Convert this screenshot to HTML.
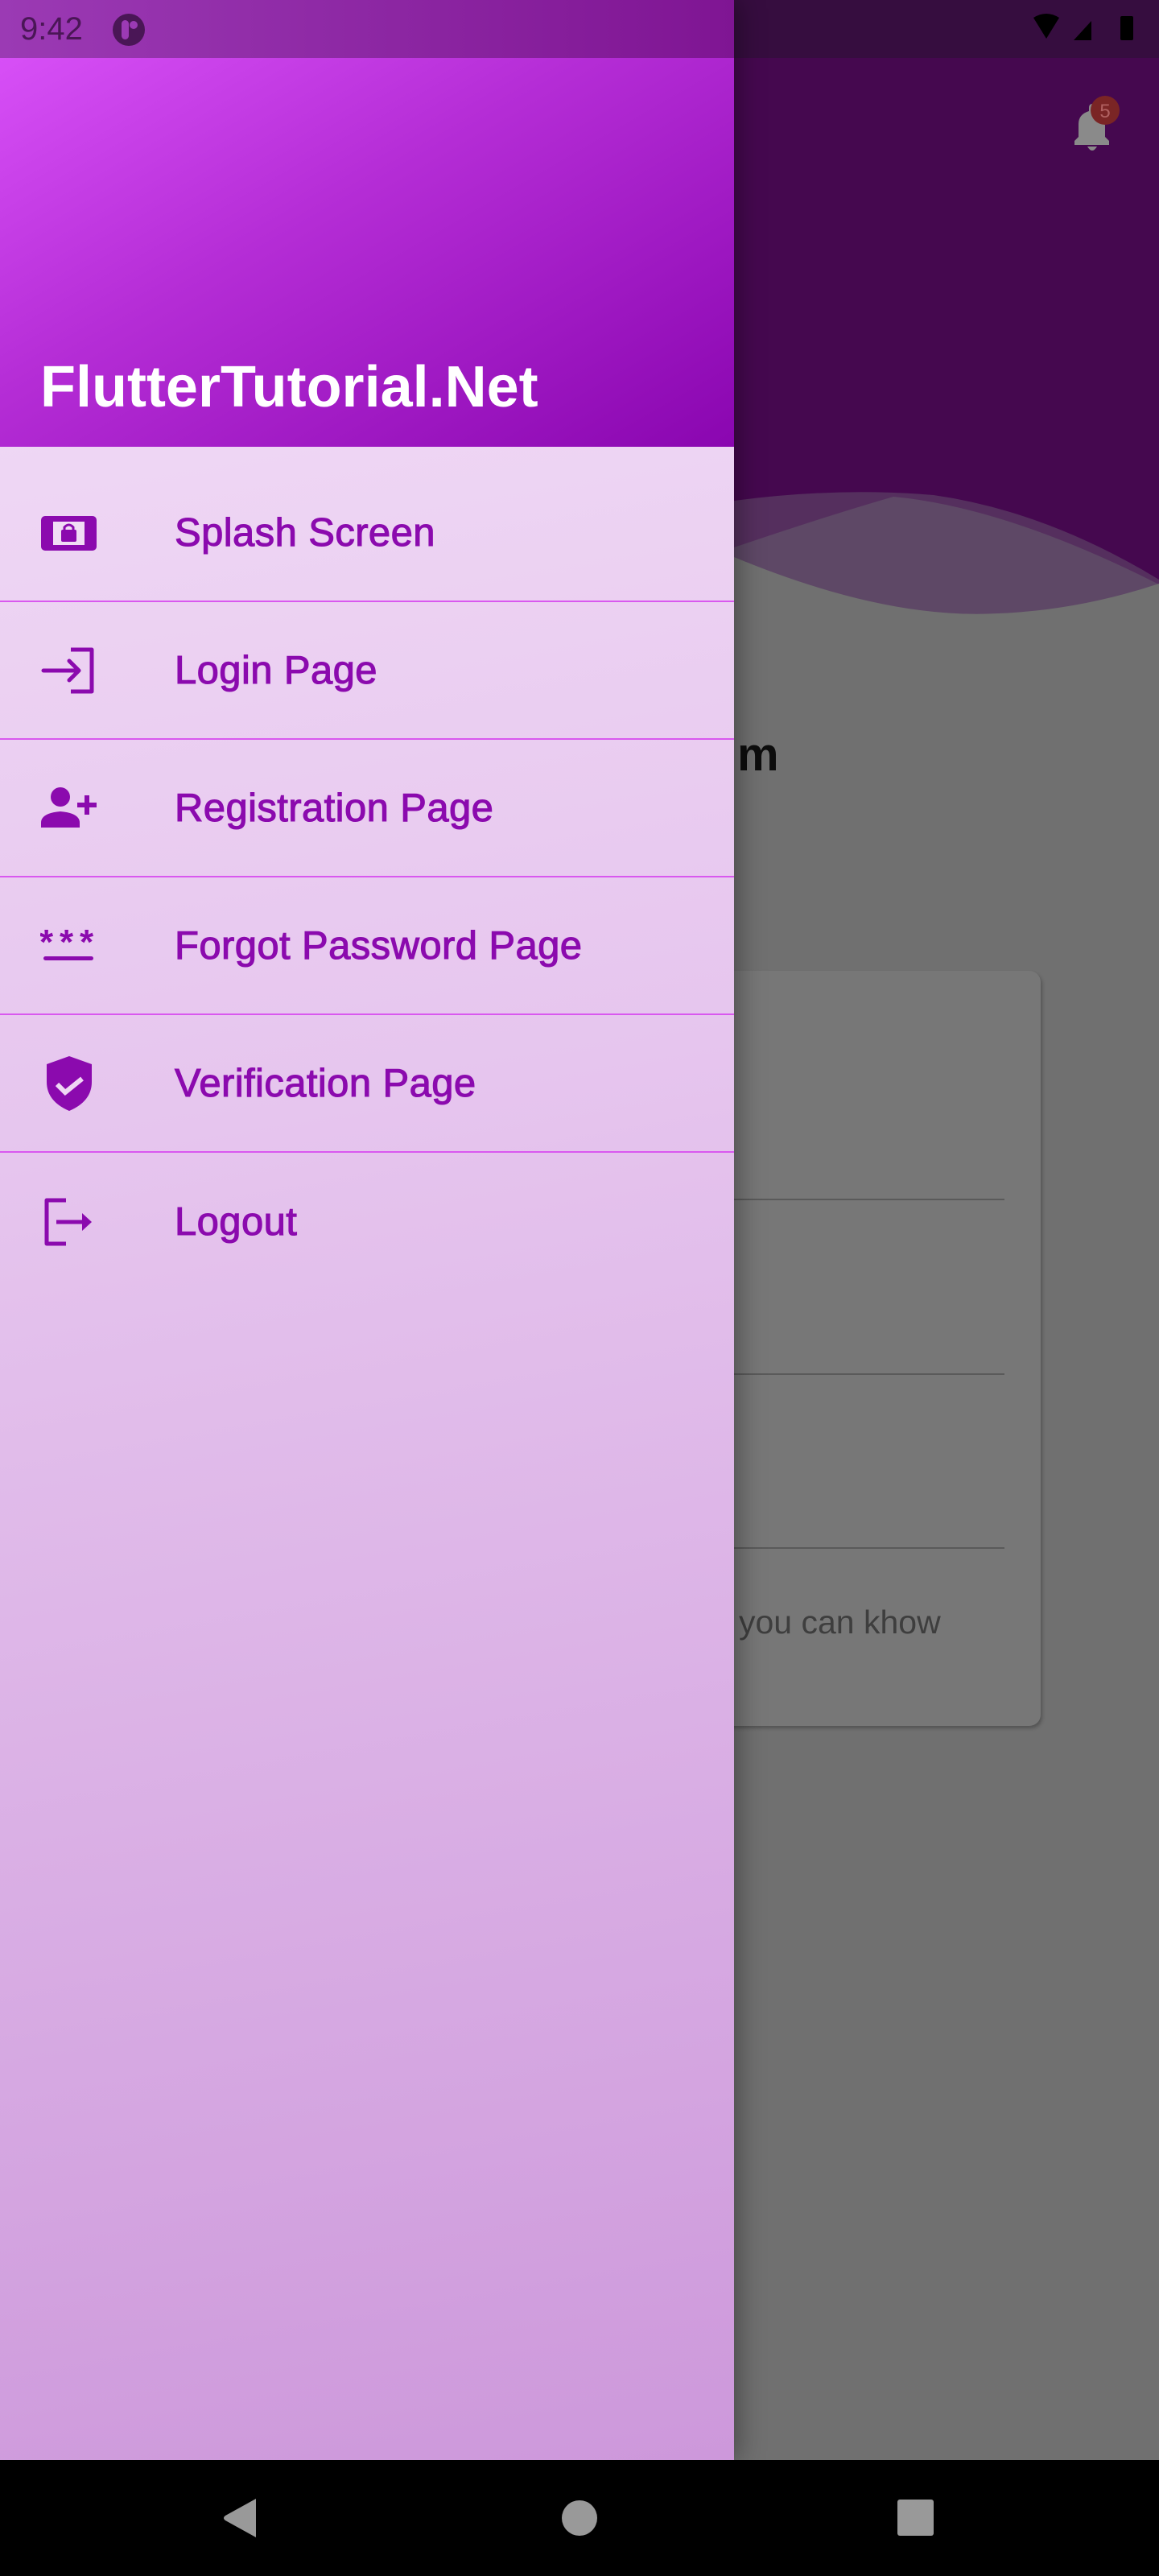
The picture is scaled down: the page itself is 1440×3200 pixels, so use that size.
<!DOCTYPE html>
<html><head><meta charset="utf-8">
<style>
*{margin:0;padding:0;box-sizing:border-box}
html,body{width:1440px;height:3200px;overflow:hidden;background:#707070;font-family:"Liberation Sans",sans-serif}
.abs{position:absolute}
#bg{left:0;top:0;width:1440px;height:3200px;background:#707070}
#drawer{left:0;top:0;width:912px;height:3056px;background:linear-gradient(170deg,#f4e2f8 0%,#e6c5ee 45%,#cd98db 100%);box-shadow:6px 0 30px rgba(0,0,0,.35)}
#header{left:0;top:0;width:912px;height:555px;background:linear-gradient(150deg,#dd55fc 0%,#b52dd6 45%,#8a06b0 100%)}
#sb{left:0;top:0;width:912px;height:72px;background:linear-gradient(90deg,#9b3ab4,#7f1593)}
#sbr{left:912px;top:0;width:528px;height:72px;background:#360d3f}
.title{left:50px;top:440px;font-size:72px;font-weight:bold;color:#fff;letter-spacing:0}
.row{left:0;width:912px;height:171px;border-bottom:2px solid #d958ef}
.row span{position:absolute;left:217px;top:50%;transform:translateY(-50%);font-size:49px;color:#8b0aae;-webkit-text-stroke:1.1px #8b0aae;letter-spacing:0.4px}
.row svg{position:absolute;left:50px;top:50%;transform:translateY(-50%)}
.nav{left:0;top:3056px;width:1440px;height:144px;background:#000}
</style></head><body>
<div id="bg" class="abs"></div>
<svg class="abs" style="left:912px;top:72px" width="528" height="720" viewBox="912 72 528 720">
<rect x="912" y="72" width="528" height="720" fill="#45084f"/>
<path d="M912 622 Q1040 605 1160 615 Q1300 635 1440 720 L1440 792 L912 792 Z" fill="#552f5e"/>
<path d="M912 680 Q1030 640 1110 617 Q1250 630 1440 726 L1440 792 L912 792 Z" fill="#5e4866"/>
<path d="M912 692 Q1100 770 1240 762 Q1340 758 1440 725 L1440 792 L912 792 Z" fill="#707070"/>
</svg>
<svg class="abs" style="left:1325px;top:118px" width="80" height="80" viewBox="0 0 80 80">
<path d="M10 62 L10 57 L15 52 L15 36 Q15 24 28 20 L28 16 Q28 11 32 11 Q36 11 36 16 L36 20 Q48 24 48 36 L48 52 L53 57 L53 62 Z" fill="#8a8a8a"/>
<path d="M26 64 Q32 74 38 64 Z" fill="#8a8a8a"/>
<circle cx="48" cy="19" r="18" fill="#7a2525"/>
<text x="48" y="28" font-size="24" fill="#b06060" text-anchor="middle" font-family="Liberation Sans">5</text>
</svg>
<div class="abs" style="left:916px;top:904px;font-size:58px;font-weight:bold;color:#0d0d0d">m</div>
<div class="abs" style="left:870px;top:1206px;width:423px;height:938px;background:#777;border-radius:14px;box-shadow:2px 3px 4px rgba(0,0,0,.25)"></div>
<div class="abs" style="left:912px;top:1489px;width:336px;height:2px;background:#5a5a5a"></div>
<div class="abs" style="left:912px;top:1706px;width:336px;height:2px;background:#5a5a5a"></div>
<div class="abs" style="left:912px;top:1922px;width:336px;height:2px;background:#5a5a5a"></div>
<div class="abs" style="left:918px;top:1992px;font-size:41px;color:#3e3e3e">you can khow</div>
<div id="sbr" class="abs"></div>
<svg class="abs" style="left:1280px;top:14px" width="160" height="44" viewBox="0 0 160 44">
<path d="M4 8 Q20 -2 36 8 L20 34 Z" fill="#000"/>
<path d="M54 36 L76 12 L76 36 Z" fill="#000"/>
<rect x="112" y="6" width="16" height="30" rx="2" fill="#000"/>
</svg>
<div id="drawer" class="abs"></div>
<div id="header" class="abs"></div>
<div id="sb" class="abs"></div>
<div class="abs" style="left:25px;top:14px;font-size:40px;color:#4a1656">9:42</div>
<svg class="abs" style="left:138px;top:15px" width="44" height="44" viewBox="0 0 44 44"><circle cx="22" cy="22" r="20" fill="#4a1656"/><rect x="13" y="10" width="9" height="24" rx="4.5" fill="#9b3ab4"/><circle cx="28" cy="16" r="5" fill="#9b3ab4"/></svg>
<div class="abs title">FlutterTutorial.Net</div>

<div class="abs row" style="top:577px"><svg width="72" height="48" viewBox="0 0 72 48"><rect x="1" y="3" width="69" height="43" rx="5" fill="#8b0aae"/><rect x="16" y="10" width="39" height="29" fill="#f1dcf5"/><rect x="26" y="20" width="19" height="15" rx="2" fill="#8b0aae"/><path d="M30 21 V17 Q35.5 11 41 17 V21" stroke="#8b0aae" stroke-width="3" fill="none"/></svg><span>Splash Screen</span></div>
<div class="abs row" style="top:748px"><svg width="72" height="60" viewBox="0 0 72 60"><path d="M4 30 H48 M36 18 L48 30 L36 42" stroke="#8b0aae" stroke-width="5" fill="none" stroke-linecap="round" stroke-linejoin="round"/><path d="M38 4 H64 V56 H38" stroke="#8b0aae" stroke-width="5" fill="none" stroke-linejoin="round"/></svg><span>Login Page</span></div>
<div class="abs row" style="top:919px"><svg width="72" height="60" viewBox="0 0 72 60"><circle cx="25" cy="16" r="12" fill="#8b0aae"/><path d="M1 54 V48 Q1 36 25 34 Q49 36 49 48 V54 Z" fill="#8b0aae"/><path d="M58 14 V38 M46 26 H70" stroke="#8b0aae" stroke-width="6"/></svg><span>Registration Page</span></div>
<div class="abs row" style="top:1090px"><svg width="72" height="50" viewBox="0 0 72 50"><g fill="#8b0aae" font-size="44" font-weight="bold" font-family="Liberation Sans"><text x="-1" y="35">*</text><text x="24" y="35">*</text><text x="49" y="35">*</text></g><rect x="4" y="38" width="62" height="5" rx="2.5" fill="#8b0aae"/></svg><span>Forgot Password Page</span></div>
<div class="abs row" style="top:1261px"><svg width="72" height="72" viewBox="0 0 72 72"><path d="M36 2 L64 12 V34 Q64 58 36 70 Q8 58 8 34 V12 Z" fill="#8b0aae"/><path d="M21 37 L31 47 L52 30" stroke="#efd6f4" stroke-width="6" fill="none"/></svg><span>Verification Page</span></div>
<div class="abs row" style="top:1432px;border-bottom:none"><svg width="72" height="62" viewBox="0 0 72 62"><path d="M32 4 H8 V58 H32" stroke="#8b0aae" stroke-width="5" fill="none" stroke-linejoin="round"/><path d="M20 31 H60" stroke="#8b0aae" stroke-width="5"/><path d="M52 20 L64 31 L52 42 Z" fill="#8b0aae"/></svg><span>Logout</span></div>

<div class="abs nav"></div>
<svg class="abs" style="left:0;top:3056px" width="1440" height="144" viewBox="0 3056 1440 144">
<path d="M318 3104 L318 3152 L280 3131 Q276 3128 280 3125 Z" fill="#999"/>
<circle cx="720" cy="3128" r="22" fill="#999"/>
<rect x="1115" y="3105" width="45" height="45" rx="3" fill="#999"/>
</svg>
</body></html>
